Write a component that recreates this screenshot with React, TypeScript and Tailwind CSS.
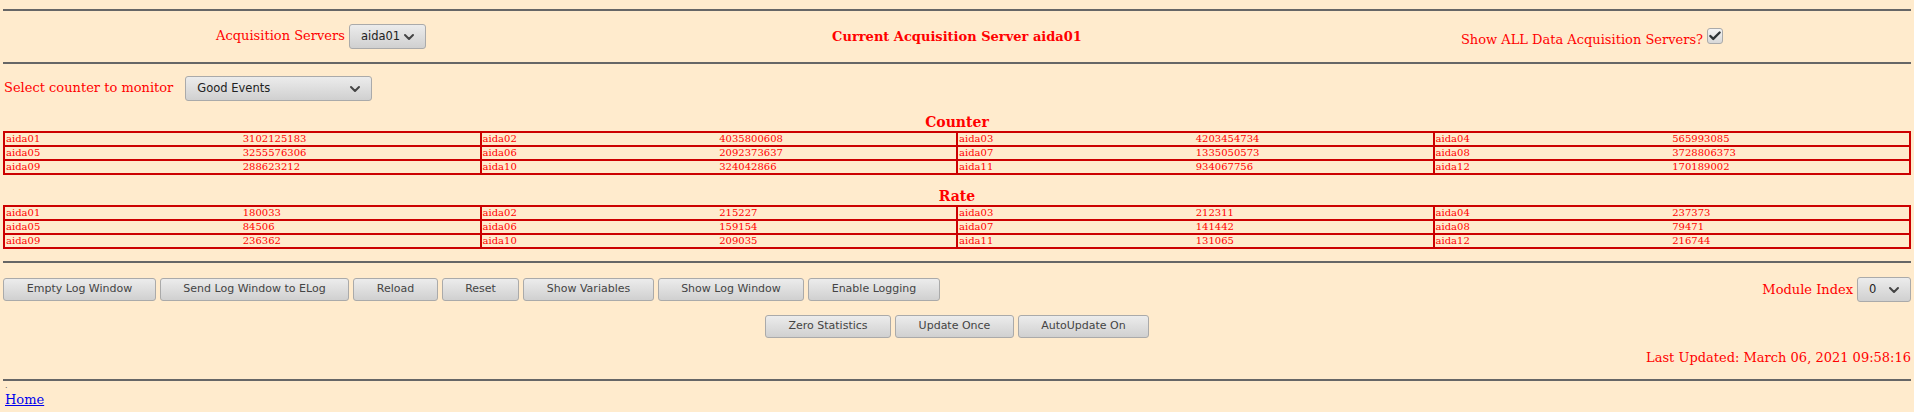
import { Check, ChevronDown } from 'lucide-react';

const serif = 'font-["DejaVu_Serif","Liberation_Serif",serif]';

const counterRows = [
  [['aida01', '3102125183'], ['aida02', '4035800608'], ['aida03', '4203454734'], ['aida04', '565993085']],
  [['aida05', '3255576306'], ['aida06', '2092373637'], ['aida07', '1335050573'], ['aida08', '3728806373']],
  [['aida09', '288623212'], ['aida10', '324042866'], ['aida11', '934067756'], ['aida12', '170189002']],
];

const rateRows = [
  [['aida01', '180033'], ['aida02', '215227'], ['aida03', '212311'], ['aida04', '237373']],
  [['aida05', '84506'], ['aida06', '159154'], ['aida07', '141442'], ['aida08', '79471']],
  [['aida09', '236362'], ['aida10', '209035'], ['aida11', '131065'], ['aida12', '216744']],
];

const logButtons = [
  { label: 'Empty Log Window', width: 'w-[153px]' },
  { label: 'Send Log Window to ELog', width: 'w-[189px]' },
  { label: 'Reload', width: 'w-[85px]' },
  { label: 'Reset', width: 'w-[77px]' },
  { label: 'Show Variables', width: 'w-[131px]' },
  { label: 'Show Log Window', width: 'w-[146px]' },
  { label: 'Enable Logging', width: 'w-[132px]' },
];

const updateButtons = [
  { label: 'Zero Statistics', width: 'w-[126px]' },
  { label: 'Update Once', width: 'w-[119px]' },
  { label: 'AutoUpdate On', width: 'w-[131px]' },
];

function Rule() {
  return <div className="h-[2px] bg-[#666666]" />;
}

function Dropdown({ value, className }: { value: string; className: string }) {
  return (
    <button
      className={`flex h-[25px] items-center justify-between rounded-[3px] border border-[#aaaaaa] bg-gradient-to-b from-[#ececec] to-[#d0d0d0] pr-[8px] pl-[11px] font-["DejaVu_Sans",sans-serif] text-[11.5px] text-[#222222] ${className}`}
    >
      <span className="pt-[1px]">{value}</span>
      <ChevronDown size={16} strokeWidth={3} className="text-[#444444]" />
    </button>
  );
}

function ActionButton({ label, width }: { label: string; width: string }) {
  return (
    <button
      className={`h-[23px] rounded-[3px] border border-[#aaaaaa] bg-gradient-to-b from-[#ececec] to-[#d0d0d0] font-["DejaVu_Sans",sans-serif] text-[11px] text-[#444444] ${width}`}
    >
      {label}
    </button>
  );
}

function StatsTable({ title, rows }: { title: string; rows: string[][][] }) {
  return (
    <>
      <h2 className="mt-[12px] h-[18px] text-center text-[14px] leading-[18px] font-bold">{title}</h2>
      <table className="w-full table-fixed border-collapse text-[10px] leading-[12px]">
        <tbody>
          {rows.map((row, i) => (
            <tr key={i} className="h-[14px]">
              {row.map(([name, value]) => (
                <td key={name} className="border-2 border-[#cc0000] p-0 align-middle">
                  <div className="grid grid-cols-2 pl-[1px]">
                    <span>{name}</span>
                    <span>{value}</span>
                  </div>
                </td>
              ))}
            </tr>
          ))}
        </tbody>
      </table>
    </>
  );
}

export default function App() {
  return (
    <div className={`min-h-screen bg-[#ffebcd] px-[3px] pt-[9px] text-[13px] text-[#ff0000] ${serif}`}>
      <Rule />

      {/* Server selection */}
      <div className="grid h-[51px] grid-cols-3 items-center text-center">
        <div className="flex items-center justify-center gap-[4px]">
          <span className="mb-[2px]">Acquisition Servers</span>
          <Dropdown value="aida01" className="w-[77px]" />
        </div>
        <div className="font-bold">Current Acquisition Server aida01</div>
        <div className="flex items-center justify-center gap-[4px] pr-[2px]">
          <span className="mt-[6px]">Show ALL Data Acquisition Servers?</span>
          <span className="mb-[1px] flex h-[16px] w-[16px] items-center justify-center rounded-[3px] border border-[#aaaaaa] bg-gradient-to-b from-[#f4f4f4] to-[#d8d8d8]">
            <Check size={14} strokeWidth={4} className="text-[#2e3436]" />
          </span>
        </div>
      </div>

      <Rule />

      <div className="mt-[12px] flex items-center">
        <span className="mb-[2px] ml-[1px]">Select counter to monitor</span>
        <Dropdown value="Good Events" className="ml-[12px] w-[187px]" />
      </div>

      <StatsTable title="Counter" rows={counterRows} />
      <StatsTable title="Rate" rows={rateRows} />

      <div className="mt-[12px]">
        <Rule />
      </div>

      {/* Log controls */}
      <div className="mt-[14px] flex h-[25px] items-center justify-between">
        <div className="flex gap-[4px]">
          {logButtons.map((b) => (
            <ActionButton key={b.label} label={b.label} width={b.width} />
          ))}
        </div>
        <div className="flex items-center gap-[4px]">
          <span>Module Index</span>
          <Dropdown value="0" className="w-[54px]" />
        </div>
      </div>

      <div className="mt-[13px] flex justify-center gap-[4px]">
        {updateButtons.map((b) => (
          <ActionButton key={b.label} label={b.label} width={b.width} />
        ))}
      </div>

      <div className="mt-[10px] h-[20px] text-right leading-[20px]">Last Updated: March 06, 2021 09:58:16</div>

      <div className="mt-[11px]">
        <Rule />
      </div>

      <div className="ml-[2px] h-[10px] text-[8px] leading-[10px] text-[#333333]">.</div>
      <a href="#" className="ml-[2px] block w-fit leading-[18px] text-[#0000ee] underline">
        Home
      </a>
    </div>
  );
}
